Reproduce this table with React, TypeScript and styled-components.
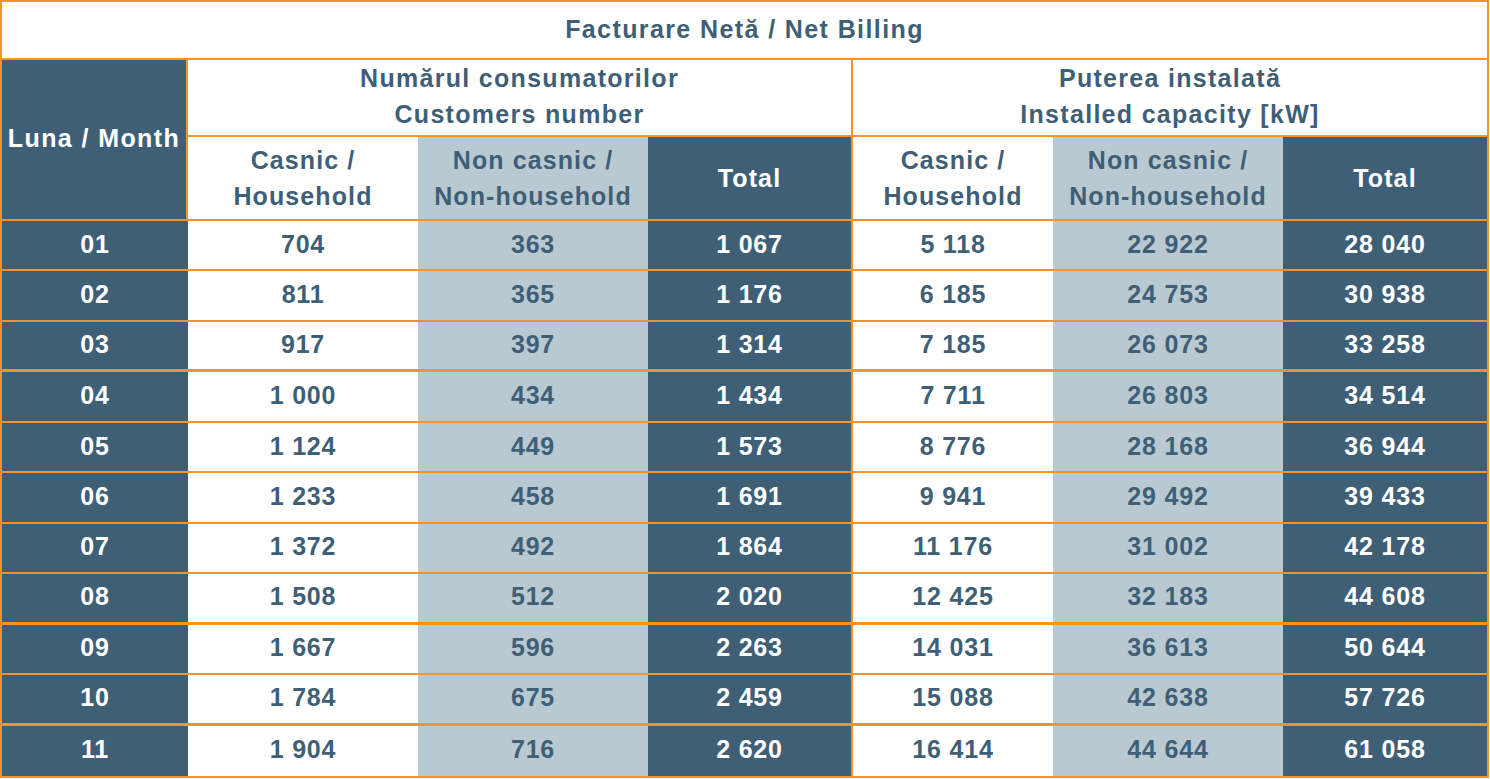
import React from "react";
import styled, { createGlobalStyle, css } from "styled-components";

const ORANGE = "#f2942a";
const DARK = "#3f5f77";
const LIGHT = "#b9c9d1";

const Global = createGlobalStyle`
  html, body { margin: 0; padding: 0; background: #ffffff; }
  body { font-family: "Liberation Sans", Arial, sans-serif; }
`;

type Tone = "white" | "light" | "dark";

const toneCss = (tone: Tone) => {
  if (tone === "dark") return css`background: ${DARK}; color: #ffffff;`;
  if (tone === "light") return css`background: ${LIGHT}; color: ${DARK};`;
  return css`background: #ffffff; color: ${DARK};`;
};

const Table = styled.div`
  box-sizing: border-box;
  width: 1489px;
  height: 778px;
  border: 2px solid ${ORANGE};
  display: grid;
  grid-template-columns: 186px 230px 230px 205px 200px 230px 204px;
  grid-template-rows: 58px 77px 84px repeat(11, 1fr);
  font-family: "Liberation Sans", Arial, sans-serif;
  font-weight: 700;
  font-size: 25px;
`;

const Cell = styled.div<{ $tone: Tone; $right?: boolean; $bottom?: number }>`
  box-sizing: border-box;
  display: flex;
  align-items: center;
  justify-content: center;
  text-align: center;
  ${(p) => toneCss(p.$tone)}
  border-right: ${(p) => (p.$right ? `2px solid ${ORANGE}` : "none")};
  border-bottom: ${(p) => (p.$bottom ? `${p.$bottom}px solid ${ORANGE}` : "none")};
`;

const TitleCell = styled(Cell)`
  grid-column: 1 / -1;
  letter-spacing: 1.4px;
  padding-bottom: 1px;
`;

const MonthHead = styled(Cell)`
  grid-row: span 2;
  letter-spacing: 1.4px;
  white-space: nowrap;
  padding-bottom: 2px;
`;

const GroupHead = styled(Cell)`
  grid-column: span 3;
  flex-direction: column;
  line-height: 36px;
  letter-spacing: 1.3px;
  padding-bottom: 4px;
`;

const SubHead = styled(Cell)`
  flex-direction: column;
  line-height: 36px;
  letter-spacing: 1.1px;
`;

const DataCell = styled(Cell)`
  letter-spacing: 0.8px;
  padding-bottom: 2px;
`;

const rows: [string, string, string, string, string, string, string][] = [
  ["01", "704", "363", "1 067", "5 118", "22 922", "28 040"],
  ["02", "811", "365", "1 176", "6 185", "24 753", "30 938"],
  ["03", "917", "397", "1 314", "7 185", "26 073", "33 258"],
  ["04", "1 000", "434", "1 434", "7 711", "26 803", "34 514"],
  ["05", "1 124", "449", "1 573", "8 776", "28 168", "36 944"],
  ["06", "1 233", "458", "1 691", "9 941", "29 492", "39 433"],
  ["07", "1 372", "492", "1 864", "11 176", "31 002", "42 178"],
  ["08", "1 508", "512", "2 020", "12 425", "32 183", "44 608"],
  ["09", "1 667", "596", "2 263", "14 031", "36 613", "50 644"],
  ["10", "1 784", "675", "2 459", "15 088", "42 638", "57 726"],
  ["11", "1 904", "716", "2 620", "16 414", "44 644", "61 058"],
];

const tones: Tone[] = ["dark", "white", "light", "dark", "white", "light", "dark"];
const thick = new Set(["03", "08", "10"]);

export default function App() {
  return (
    <>
      <Global />
      <Table>
        <TitleCell $tone="white" $bottom={2}>Facturare Netă / Net Billing</TitleCell>
        <MonthHead $tone="dark" $right $bottom={2}>Luna / Month</MonthHead>
        <GroupHead $tone="white" $right $bottom={2}>
          <span>Numărul consumatorilor</span>
          <span>Customers number</span>
        </GroupHead>
        <GroupHead $tone="white" $bottom={2}>
          <span>Puterea instalată</span>
          <span>Installed capacity [kW]</span>
        </GroupHead>
        <SubHead $tone="white" $bottom={2}>
          <span>Casnic /</span>
          <span>Household</span>
        </SubHead>
        <SubHead $tone="light" $bottom={2}>
          <span>Non casnic /</span>
          <span>Non-household</span>
        </SubHead>
        <SubHead $tone="dark" $right $bottom={2}>
          <span>Total</span>
        </SubHead>
        <SubHead $tone="white" $bottom={2}>
          <span>Casnic /</span>
          <span>Household</span>
        </SubHead>
        <SubHead $tone="light" $bottom={2}>
          <span>Non casnic /</span>
          <span>Non-household</span>
        </SubHead>
        <SubHead $tone="dark" $bottom={2}>
          <span>Total</span>
        </SubHead>
        {rows.map((r, ri) =>
          r.map((v, ci) => (
            <DataCell
              key={`${ri}-${ci}`}
              $tone={tones[ci]}
              $right={ci === 3}
              $bottom={ri === rows.length - 1 ? 0 : thick.has(r[0]) ? 3 : 2}
            >
              {v}
            </DataCell>
          ))
        )}
      </Table>
    </>
  );
}
